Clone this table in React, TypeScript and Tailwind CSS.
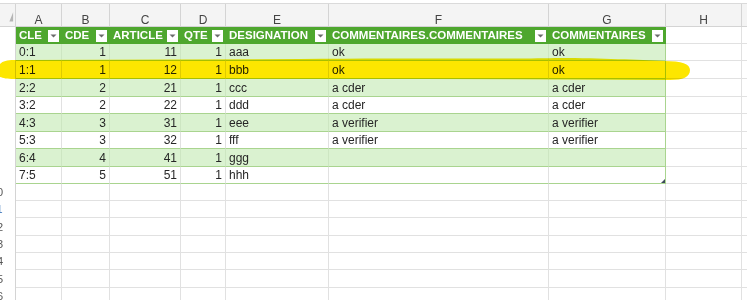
const columns = [
	{ letter: "A", width: "w-[46px]", head: "CLE", align: "left" },
	{ letter: "B", width: "w-[48px]", head: "CDE", align: "right" },
	{ letter: "C", width: "w-[71px]", head: "ARTICLE", align: "right" },
	{ letter: "D", width: "w-[45px]", head: "QTE", align: "right" },
	{ letter: "E", width: "w-[103px]", head: "DESIGNATION", align: "left" },
	{ letter: "F", width: "w-[220px]", head: "COMMENTAIRES.COMMENTAIRES", align: "left" },
	{ letter: "G", width: "w-[117px]", head: "COMMENTAIRES", align: "left" },
];

const rows: string[][] = [
	["0:1", "1", "11", "1", "aaa", "ok", "ok"],
	["1:1", "1", "12", "1", "bbb", "ok", "ok"],
	["2:2", "2", "21", "1", "ccc", "a cder", "a cder"],
	["3:2", "2", "22", "1", "ddd", "a cder", "a cder"],
	["4:3", "3", "31", "1", "eee", "a verifier", "a verifier"],
	["5:3", "3", "32", "1", "fff", "a verifier", "a verifier"],
	["6:4", "4", "41", "1", "ggg", "", ""],
	["7:5", "5", "51", "1", "hhh", "", ""],
];

const dataHeights = ["h-[17px]", "h-[18px]", "h-[18px]", "h-[17px]", "h-[18px]", "h-[17px]", "h-[18px]", "h-[17px]"];
const emptyHeights = ["h-[17px]", "h-[17px]", "h-[18px]", "h-[17px]", "h-[17px]", "h-[18px]", "h-[17px]"];

// row numbers sit mostly left of the visible area, only the last digit of 10+ peeks in
function RowHead({ n, active }: { n: number; active?: boolean }) {
	return (
		<div className="w-[16px] shrink-0 overflow-hidden border-r border-[#d4d4d4] bg-white flex items-center">
			<div
				className={`w-[38px] shrink-0 ml-[-22px] text-center text-[11px] ${active ? "text-[#2f6db5]" : "text-[#555]"}`}
			>
				{n}
			</div>
		</div>
	);
}

function FilterButton() {
	return (
		<div className="w-[11px] h-[12px] shrink-0 mr-[3px] bg-white flex items-center justify-center">
			<svg width="7" height="4" viewBox="0 0 7 4">
				<path d="M0.5 0.5 L6.5 0.5 L3.5 3.5 Z" fill="#6b6b6b" />
			</svg>
		</div>
	);
}

export default function App() {
	return (
		<div className="relative w-[747px] h-[300px] overflow-hidden bg-white font-['Liberation_Sans',Arial,sans-serif] text-[12px] text-[#262626]">
			<div className="h-[4px] bg-white border-b border-[#dadada]" />

			{/* column letters */}
			<div className="flex h-[23px] bg-[#f4f4f4] border-b border-[#d4d4d4]">
				<div className="w-[16px] shrink-0 border-r border-[#d4d4d4] flex items-start">
					<svg width="16" height="22" viewBox="0 0 16 22">
						<path d="M14 8 L14 18 L10 18 Z" fill="#b5b5b5" />
					</svg>
				</div>
				{columns.map((c) => (
					<div
						key={c.letter}
						className={`${c.width} shrink-0 border-r border-[#d4d4d4] flex items-start justify-center pt-[10px] leading-[12px] text-[12px] text-[#444]`}
					>
						{c.letter}
					</div>
				))}
				<div className="w-[76px] shrink-0 border-r border-[#d4d4d4] flex items-start justify-center pt-[10px] leading-[12px] text-[12px] text-[#444]">
					H
				</div>
				<div className="flex-1" />
			</div>

			{/* table header */}
			<div className="flex h-[17px]">
				<RowHead n={1} />
				{columns.map((c) => (
					<div
						key={c.head}
						className={`${c.width} shrink-0 bg-[#4ea72e] flex items-center justify-between pl-[3px] text-[11.5px] font-bold text-white whitespace-nowrap`}
					>
						<span>{c.head}</span>
						<FilterButton />
					</div>
				))}
				<div className="w-[76px] shrink-0 border-r border-b border-[#e1e1e1]" />
				<div className="flex-1 border-b border-[#e1e1e1]" />
			</div>

			{/* table data */}
			{rows.map((r, i) => {
				const banded = i % 2 === 0;
				return (
					<div key={r[0]} className={`flex ${dataHeights[i]}`}>
						<RowHead n={i + 2} />
						{columns.map((c, j) => (
							<div
								key={c.letter}
								className={`${c.width} shrink-0 relative border-b border-[#a9d48f] flex items-center whitespace-nowrap ${
									banded ? "bg-[#daf2d0]" : "bg-white"
								} ${
									j === columns.length - 1
										? "border-r border-r-[#a9d48f]"
										: banded
											? "border-r border-r-[#cde6c2]"
											: "border-r border-r-[#e1e1e1]"
								} ${c.align === "right" ? "justify-end pr-[3px]" : "pl-[3px]"}`}
							>
								{r[j]}
								{i === rows.length - 1 && j === columns.length - 1 && (
									<svg className="absolute right-0 bottom-0" width="4" height="4" viewBox="0 0 4 4">
										<path d="M4 0 L4 4 L0 4 Z" fill="#3d4a5a" />
									</svg>
								)}
							</div>
						))}
						<div className="w-[76px] shrink-0 border-r border-b border-[#e1e1e1]" />
						<div className="flex-1 border-b border-[#e1e1e1]" />
					</div>
				);
			})}

			{/* empty sheet rows */}
			{emptyHeights.map((h, i) => (
				<div key={h + i} className={`flex ${h}`}>
					<RowHead n={i + 10} active={i === 1} />
					{columns.map((c) => (
						<div key={c.letter} className={`${c.width} shrink-0 border-r border-b border-[#e1e1e1]`} />
					))}
					<div className="w-[76px] shrink-0 border-r border-b border-[#e1e1e1]" />
					<div className="flex-1 border-b border-[#e1e1e1]" />
				</div>
			))}

			{/* highlighter stroke over row 1:1 */}
			<svg
				className="absolute left-0 top-0 pointer-events-none mix-blend-multiply"
				width="747"
				height="300"
				viewBox="0 0 747 300"
			>
				<path
					d="M0 64 C3 61 7 60 14 60 L300 59 C420 58 520 59 560 58 C600 58 640 60 664 61 C682 61 690 64 690 70 C690 77 683 80 670 80 L420 79 L14 79 C7 79 3 78 0 77 Z"
					fill="#fde600"
				/>
			</svg>
		</div>
	);
}
